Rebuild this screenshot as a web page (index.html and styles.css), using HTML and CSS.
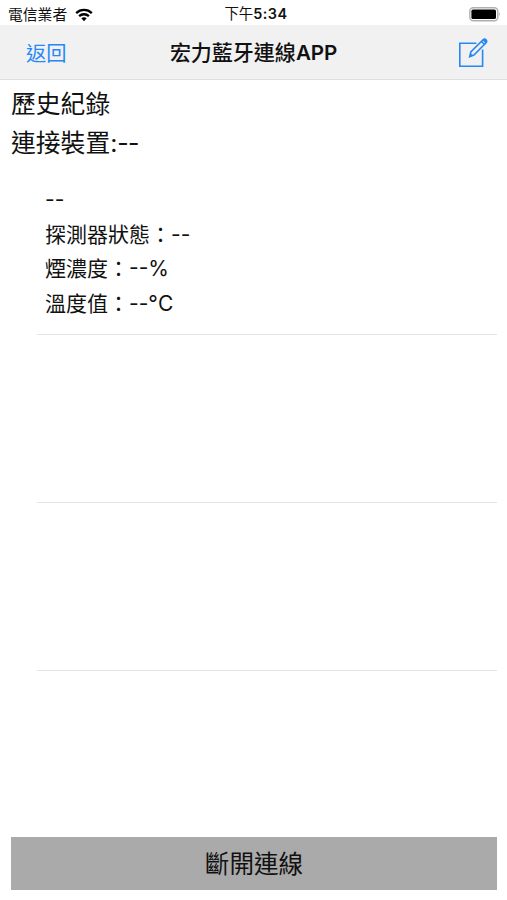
FILE: index.html
```html
<!DOCTYPE html>
<html lang="zh-Hant">
<head>
    <meta charset="UTF-8">
    <meta name="viewport" content="width=device-width, initial-scale=1.0">
    <title>宏力藍牙連線APP</title>
    <link rel="stylesheet" href="styles.css">
</head>
<body>
    <div class="status-bar">
        <div class="carrier">
            <span>電信業者</span>
            <svg class="wifi" width="18" height="14" viewBox="0 0 18 14" fill="none" stroke="#000" stroke-width="2.3">
                <path d="M1.2 5.1C5.6 .9 12.4 .9 16.8 5.1"/>
                <path d="M4.1 8.2C6.9 5.6 11.1 5.6 13.9 8.2"/>
                <path d="M6.3 10.3C7.8 8.9 10.2 8.9 11.7 10.3L9 13.2Z" fill="#000" stroke="none"/>
            </svg>
        </div>
        <div class="time">下午<span class="digits">5:34</span></div>
        <svg class="battery" width="32" height="15" viewBox="0 0 32 15">
            <rect x=".8" y=".8" width="28" height="13" rx="3.5" fill="#fff" stroke="#b0b0b0" stroke-width="1.4"/>
            <rect x="2.4" y="2.6" width="24.6" height="9.4" rx="1.6"/>
            <path d="M30.4 5.3Q32 7.3 30.4 9.3Z" fill="#999"/>
        </svg>
    </div>
    <header class="nav-bar">
        <a class="back">返回</a>
        <h1>宏力藍牙連線<span class="latin">APP</span></h1>
        <a class="edit">
            <svg width="30" height="30" viewBox="0 0 30 30" fill="none" stroke="#2688f5" stroke-width="1.6">
                <path d="M18.4 5.3H1.8V28.2H24.6V11.6"/>
                <path d="M11.7 18.6L12.8 14L25.2 1.6Q26.8 .6 28.2 2Q29.2 3.2 28.3 4.6L15.9 17Z M23.4 3.5L26.5 6.5"/>
                <path d="M11.7 18.6L12.6 15L14.9 17.4Z M24.6 2.4L25.4 1.6Q26.8 .6 28.2 2Q29.2 3.2 28.3 4.6L27.5 5.3Z" fill="#2688f5" stroke="none"/>
            </svg>
        </a>
    </header>
    <main>
        <div class="heading">歷史紀錄</div>
        <div class="heading">連接裝置:<span class="dashes">--</span></div>
        <ul class="records">
            <li>
                <p>--</p>
                <p>探測器狀態：--</p>
                <p>煙濃度：--%</p>
                <p>溫度值：--°C</p>
            </li>
            <li></li>
            <li></li>
        </ul>
        <button class="disconnect">斷開連線</button>
    </main>
</body>
</html>
```

FILE: styles.css
```css
body {
    font-family: Inter, "Noto Sans CJK TC", sans-serif;
    background-color: #fff;
    color: #111;
    height: 900px;
    margin: 0;
    display: flex;
    flex-direction: column;
}
.status-bar, .nav-bar {
    display: grid;
    grid-template-columns: 1fr auto 1fr;
    align-items: center;
    box-sizing: border-box;
}
.status-bar {
    height: 25px;
    padding: 2px 6px 0 8px;
    font-size: 14.8px;
    line-height: 23px;
}
.carrier {
    display: flex;
    align-items: center;
    gap: 8px;
}
.carrier span {
    padding-top: 1px;
}
.time {
    padding: 0 0 2px 3px;
    font-size: 14.4px;
}
.digits {
    font-weight: 600;
    letter-spacing: .5px;
}
.battery {
    justify-self: end;
}
.nav-bar {
    height: 55px;
    padding: 2px 19px 0;
    background-color: #f1f1f2;
    border-bottom: 1px solid #dedee0;
}
.back {
    padding: 0 0 2px 7px;
    color: #2688f5;
    font-size: 20.3px;
}
h1 {
    margin: 0;
    font-size: 21px;
    font-weight: 500;
    line-height: 30px;
}
.latin {
    font-weight: 600;
    font-size: 20.6px;
    letter-spacing: -.1px;
}
.edit {
    justify-self: end;
    display: flex;
}
main {
    flex: 1;
    display: flex;
    flex-direction: column;
    padding: 5px 10px 10px 11px;
}
.heading {
    font-size: 24.8px;
    line-height: 39px;
}
.dashes {
    letter-spacing: -.7px;
}
.records {
    list-style: none;
    margin: 20px 0 0 26px;
    padding: 0;
}
.records li {
    box-sizing: border-box;
    height: 168px;
    padding: 0 0 0 8px;
    border-bottom: 1px solid #e4e4e4;
}
.records li:first-child {
    height: 152px;
}
.records p {
    margin: 0;
    font-size: 21px;
    line-height: 34.5px;
}
.disconnect {
    height: 53px;
    margin-top: auto;
    padding: 0 0 3px;
    border: none;
    background-color: #aaa;
    color: #111;
    font-family: inherit;
    font-size: 24.6px;
}
```
